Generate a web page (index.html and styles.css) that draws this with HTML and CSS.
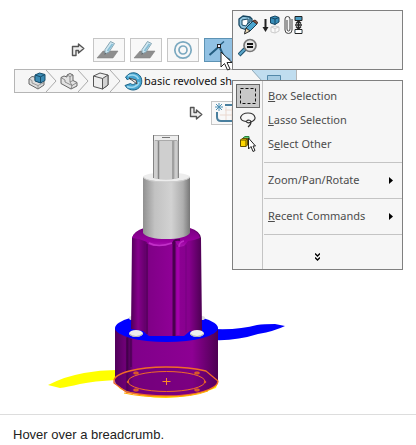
FILE: index.html
```html
<!DOCTYPE html>
<html lang="en">
<head>
    <meta charset="utf-8">
    <meta name="viewport" content="width=device-width, initial-scale=1">
    <title>Selection Breadcrumbs</title>
    <link rel="stylesheet" href="styles.css">
</head>

<body>
    <figure class="figure">
        <div class="stage">
            <!-- Sketch row above the breadcrumb -->
            <div class="tool-row tool-row-top">
                <svg class="turn-arrow" width="14" height="14" viewBox="0 0 14 14">
                    <path d="M1.5 12.5V3.5H7.5V1L12.8 5.5 7.5 10V7.5H5V12.5Z" fill="#eee" stroke="#555" stroke-width="1.4" stroke-linejoin="round"/>
                </svg>
                <button class="tool" aria-label="Sketch 1">
                    <svg width="26" height="20" viewBox="0 0 26 20">
                        <path d="M7 11H22L17 18H1Z" fill="#8e8e8e" stroke="#7c7c7c" stroke-width=".5"/>
                        <path d="M14.500 1.500 18.500 3.500 13 12 9 14 9 9.500Z" fill="#cfe7f1" stroke="#7c9dac" stroke-width=".9"/>
                        <path d="M16.500 4 11.500 11" stroke="#86bdd5" stroke-width="1.800"/>
                        <path d="M8.500 15 8.800 12.500 10.500 13.500Z" fill="#666"/>
                    </svg>
                </button>
                <button class="tool" aria-label="Sketch 2">
                    <svg width="26" height="20" viewBox="0 0 26 20">
                        <path d="M7 11H22L17 18H1Z" fill="#8e8e8e" stroke="#7c7c7c" stroke-width=".5"/>
                        <path d="M14.500 1.500 18.500 3.500 13 12 9 14 9 9.500Z" fill="#cfe7f1" stroke="#7c9dac" stroke-width=".9"/>
                        <path d="M16.500 4 11.500 11" stroke="#86bdd5" stroke-width="1.800"/>
                        <path d="M8.500 15 8.800 12.500 10.500 13.500Z" fill="#666"/>
                    </svg>
                </button>
                <button class="tool" aria-label="Concentric mate">
                    <svg width="20" height="20" viewBox="0 0 20 20" fill="none" stroke="#7ba9c0" stroke-width="1.7">
                        <circle cx="10" cy="10" r="8.2"/>
                        <circle cx="10" cy="10" r="4"/>
                    </svg>
                </button>
                <button class="tool tool-hover" aria-label="Coincident mate">
                    <svg width="24" height="20" viewBox="0 0 24 20" fill="none">
                        <path d="M1.500 15 10 7.500M12 8 16 17 22 20" stroke="#245d80" stroke-width="2"/>
                        <path d="M12 5 16 1.500" stroke="#245d80" stroke-width="1.4"/>
                        <rect x="9.500" y="4.500" width="3" height="3" fill="#eef" stroke="#222"/>
                    </svg>
                </button>
            </div>

            <ol class="breadcrumb">
                <li class="crumb">
                    <a href="#assembly" aria-label="Assembly">
                        <svg width="18" height="18" viewBox="0 0 18 18" stroke-linejoin="round">
                            <path d="M1 7 4 4.5 7 5V8L11 10 16 8V13L10 17 1 12Z" fill="#ddd" stroke="#666"/>
                            <path d="M1 7 4 8.5V11L10 13.5V17M10 13.5 16 10.5" fill="none" stroke="#888" stroke-width=".8"/>
                            <path d="M7 3 11.5 1 17 2.5V8.5L12.5 11 7 9Z" fill="#3b8bb4" stroke="#174d6b"/>
                            <path d="M7 3 12.5 4.8 17 2.5M12.5 4.8V11" fill="none" stroke="#174d6b"/>
                        </svg>
                    </a>
                    <svg class="crumb-sep" width="11" height="22" viewBox="0 0 11 22"><path d="M0 0 10 11 0 22" fill="none" stroke="#aaa"/></svg>
                </li>
                <li class="crumb">
                    <a href="#component" aria-label="Component">
                        <svg width="18" height="18" viewBox="0 0 18 18" stroke="#666" stroke-linejoin="round">
                            <path d="M1 5.500 4 4 7 5V3L10 1.500 13 3V8.500L17 10.500V14L11 17 1 11.5Z" fill="#e2e2e2"/>
                            <path d="M7 3 10 4.5 13 3M10 4.5V10L13 8.500M10 10 12 13.500 17 10.500M1 5.500 5 8V10L12 13.500 11 17" fill="none" stroke="#777" stroke-width=".8"/>
                        </svg>
                    </a>
                    <svg class="crumb-sep" width="11" height="22" viewBox="0 0 11 22"><path d="M0 0 10 11 0 22" fill="none" stroke="#aaa"/></svg>
                </li>
                <li class="crumb">
                    <a href="#body" aria-label="Body">
                        <svg width="18" height="18" viewBox="0 0 18 18" stroke="#555" stroke-linejoin="round">
                            <path d="M1.5 4 8 1 16 3V13L10.5 17 1.5 14.5Z" fill="#eee"/>
                            <path d="M10.5 6.5 16 3V13L10.5 17Z" fill="#d2d2d2"/>
                            <path d="M1.5 4 10.5 6.5" fill="none"/>
                        </svg>
                    </a>
                    <svg class="crumb-sep" width="11" height="22" viewBox="0 0 11 22"><path d="M0 0 10 11 0 22" fill="none" stroke="#aaa"/></svg>
                </li>
                <li class="crumb crumb-feature">
                    <a href="#feature">
                        <svg width="19" height="19" viewBox="0 0 19 19" stroke-linejoin="round">
                            <path d="M5 2C9-.5 15 1 17 5.500 19 10 17 16 12 17.500 8 19 3 17 1 13.500L6.500 11.500C9 13.500 12 12 12 9.500L5 6.500 3.500 8 1.500 5Z" fill="#49a7d2" stroke="#1b6286"/>
                            <path d="M4 4C8 2 13 3 14.500 7M3 14.500C8 16.500 14 14.500 15 10" fill="none" stroke="#a1daf0" stroke-width="1.500"/>
                            <path d="M5 6 12 8 13 12Z" fill="#eee" stroke="#333" stroke-width=".8"/>
                        </svg>
                        <span>basic revolved sh</span>
                    </a>
                </li>
                <li class="crumb crumb-face">
                    <svg class="crumb-sep" width="11" height="22" viewBox="0 0 11 22"><path d="M0 0 10 11 0 22Z" fill="#f6f6f6"/><path d="M0 0 10 11 0 22" fill="none" stroke="#8fa9b8"/></svg>
                    <a href="#face" aria-label="Face">
                        <svg width="16" height="14" viewBox="0 0 16 14"><path d="M1.500 1.500H14.500V12.500H1.500Z" fill="#a5cbe2" stroke="#5288a9"/></svg>
                    </a>
                </li>
            </ol>

            <!-- Features row below the breadcrumb -->
            <div class="tool-row tool-row-bottom">
                <svg class="turn-arrow" width="14" height="14" viewBox="0 0 14 14">
                    <path d="M1.500 1.500V10.500H7.500V13L12.800 8.500 7.500 4V6.500H5V1.500Z" fill="#eee" stroke="#555" stroke-width="1.400" stroke-linejoin="round"/>
                </svg>
                <button class="tool" aria-label="New sketch">
                    <svg width="24" height="20" viewBox="0 0 24 20" fill="none">
                        <path d="M10 7H24M5 12H24M11 4V17M17 4V17" stroke="#ead8cf"/>
                        <path d="M10 2H24M2 9V14Q2 18 6 18H24" stroke="#497f9e" stroke-width="2"/>
                        <path d="M4 0V8M0 4H8M1 1 7 7M7 1 1 7" stroke="#4c90b5"/>
                    </svg>
                </button>
            </div>

            <svg class="model" width="260" height="274" viewBox="40 130 260 274" role="img" aria-label="Revolved shaft model">
                <defs>
                    <linearGradient id="steel">
                        <stop offset="0" stop-color="#909090"/>
                        <stop offset=".25" stop-color="#c2c2c2"/>
                        <stop offset=".6" stop-color="#d2d2d2"/>
                        <stop offset=".85" stop-color="#aeaeae"/>
                        <stop offset="1" stop-color="#777"/>
                    </linearGradient>
                    <linearGradient id="hub">
                        <stop offset="0" stop-color="#500057"/>
                        <stop offset=".1" stop-color="#85008b"/>
                        <stop offset=".2" stop-color="#64006b"/>
                        <stop offset=".25" stop-color="#800087"/>
                        <stop offset=".58" stop-color="#8f0096"/>
                        <stop offset=".82" stop-color="#86008d"/>
                        <stop offset="1" stop-color="#4c0052"/>
                    </linearGradient>
                    <linearGradient id="flange">
                        <stop offset="0" stop-color="#50005a"/>
                        <stop offset=".1" stop-color="#700078"/>
                        <stop offset=".12" stop-color="#480050"/>
                        <stop offset=".18" stop-color="#80008a"/>
                        <stop offset=".75" stop-color="#8d0093"/>
                        <stop offset="1" stop-color="#4d0053"/>
                    </linearGradient>
                    <linearGradient id="rim" x2="0" y2="1">
                        <stop offset="0" stop-color="#780080"/>
                        <stop offset=".7" stop-color="#9a00a1"/>
                        <stop offset="1" stop-color="#ad18b4"/>
                    </linearGradient>
                </defs>

                <!-- yellow and blue section faces -->
                <path d="M48 385Q66 376 84 373 100 370 116 370V380Q94 381 80 384 67 387 60 388Z" fill="#ff0"/>
                <path d="M115 382A52 16 0 0 0 218 382L216 388Q195 397 166 398 142 398 120 389Z" fill="#ff0"/>
                <path d="M214 329Q240 330 257 325 264 324 275 324L285 326Q275 331 258 334 236 341 214 340Z" fill="#00f"/>

                <!-- flange -->
                <path d="M115 328V381C116 388 132 396 166 396 200 396 218 388 218 381V328Z" fill="url(#flange)"/>
                <path d="M127 338V391M131 339V367" stroke="#3f0047"/>
                <ellipse cx="166.500" cy="328" rx="51.500" ry="14" fill="#00f"/>
                <path d="M114 381C114 373 138 367 166 367 184 367 198 369 206 371L218 381C218 389 196 396 166 396 150 396 136 394 126 392L114 383Z" fill="#65006d" fill-opacity=".45" stroke="#f16b27" stroke-width="1.300"/>
                <ellipse cx="166.500" cy="381.500" rx="38.500" ry="10" fill="none" stroke="#f16b27"/>
                <path d="M124 393Q142 397 166 397 192 397 208 391" fill="none" stroke="#fa0"/>
                <g fill="#b54522" stroke="#f16b27">
                    <ellipse cx="136" cy="373" rx="2.500" ry="1"/>
                    <ellipse cx="197" cy="373" rx="2.500" ry="1"/>
                    <ellipse cx="136" cy="390" rx="2.500" ry="1"/>
                    <ellipse cx="197" cy="390" rx="2.500" ry="1"/>
                    <circle cx="128" cy="382" r=".8"/>
                    <circle cx="205" cy="382" r=".8"/>
                </g>
                <path d="M162.500 381.500H170.500M166.500 378V385" stroke="#ff8a22"/>

                <!-- hub -->
                <ellipse cx="132" cy="318" rx="3" ry="2" fill="#ddd"/>
                <ellipse cx="202" cy="318" rx="3" ry="2" fill="#ddd"/>
                <path d="M132 238Q134 231 144 228H190Q200 231 201 238L202 331Q194 334 190 331L184 336H149L143 331 131 329Z" fill="url(#hub)"/>
                <path d="M132 238Q134 231 144 229H190Q199 232 200 238L194 240 188 241 184 246 179 247 174 240Q168 246 157 246 148 246 147 242L139 239Z" fill="url(#rim)"/>
                <path d="M149 243Q158 248 172 243" fill="none" stroke="#c130c8" stroke-width="1.500"/>
                <path d="M174 242V336" stroke="#49004e" stroke-width="3"/>
                <path d="M178 247V335" stroke="#a300aa" stroke-width="3"/>
                <path d="M174 245Q172 239 180 240" fill="none" stroke="#4e0054" stroke-width="2"/>
                <path d="M179 247Q179 242 184 241" fill="none" stroke="#bd2bc4" stroke-width="1.500"/>
                <path d="M147 244V334" stroke="#5c0063" stroke-width="2"/>
                <path d="M186 245V332" stroke="#770080"/>
                <ellipse cx="136" cy="333.500" rx="7" ry="3.500" fill="#eee"/>
                <ellipse cx="197" cy="333.500" rx="7" ry="3.500" fill="#eee"/>
                <path d="M129 334Q136 339 143 334M190 334Q197 339 204 334" fill="none" stroke="#aaa"/>

                <!-- shaft -->
                <path d="M143 177V233Q148 239 166 239 185 239 190 233V177Z" fill="url(#steel)"/>
                <ellipse cx="166.500" cy="177" rx="23.500" ry="4.500" fill="#ededed"/>
                <path d="M143 177Q147 182 166 182 186 182 190 177" fill="none" stroke="#ccc"/>
                <path d="M153 139H179V178Q166 181 153 178Z" fill="#bbb"/>
                <path d="M154 141H157V178H154ZM160 141H172V179H160Z" fill="#cfcfcf"/>
                <path d="M153.500 139V178M158.500 141V179M173 141V179M178.500 140V178" stroke="#858585"/>
                <path d="M176 141V178" stroke="#ddd"/>
                <path d="M153 135.500H179V140.500H153Z" fill="#eee"/>
                <path d="M153 135.500H179M155 140.500H177" stroke="#aaa"/>
                <path d="M153.500 135V141M178.500 135V141M162 137.500H170" stroke="#777"/>
            </svg>

            <!-- Context toolbar -->
            <div class="popup context-bar">
                <button class="icon-button" aria-label="Edit Feature">
                    <svg width="20" height="20" viewBox="0 0 20 20" stroke-linejoin="round">
                        <path d="M1 4 5 1 12 2 14 4V10L9 15 3 13 1 10Z" fill="#8fc4de" stroke="#164661" stroke-width="1.300"/>
                        <path d="M4 5 10 4V8L8 11 4 10Z" fill="#fff" stroke="#164661"/>
                        <path d="M12 2V7L9 9" fill="none" stroke="#164661"/>
                        <path d="M15 6 19 9 12 16 7 18 8 13Z" fill="#4aa5cf" stroke="#173d55"/>
                        <path d="M15 6 17 5 19.500 7 19 9Z" fill="#8e5b4b" stroke="#4a3028"/>
                        <path d="M8 13 12 16 6.500 19Z" fill="#ead7b2" stroke="#333"/>
                    </svg>
                </button>
                <button class="icon-button" aria-label="Suppress">
                    <svg width="20" height="20" viewBox="0 0 20 20" stroke-linejoin="round">
                        <path d="M4.500 4V14" stroke="#222" stroke-width="2"/><path d="M1.500 12H7.500L4.500 17Z" fill="#222"/>
                        <path d="M9.500 2.500 14 1 18 2.500V7L14 9.500 9.500 8Z" fill="#398eb8" stroke="#174663"/>
                        <path d="M9.500 2.500 14 4 18 2.500M14 4V9.500" fill="none" stroke="#174663"/>
                        <path d="M10 12 14 11 18 12V16L14 18 10 17ZM10 12 14 13.500 18 12M14 13.500V18" fill="#fafafa" stroke="#ccc"/>
                    </svg>
                </button>
                <button class="icon-button" aria-label="View Mates">
                    <svg width="20" height="20" viewBox="0 0 20 20" fill="none">
                        <path d="M3 5V14Q3 16 4.500 16T6 14V4Q6 1.500 3.500 1.500T1 4V15Q1 18.500 4.500 18.500T8 15V4" stroke="#444"/>
                        <path d="M11 1.500H18V5.500H11ZM11 14.500H18V18.500H11Z" fill="#4b9cc1" stroke="#222"/>
                        <path d="M11.500 15H17.500V18H11.500Z" fill="#fff"/>
                        <path d="M14.500 6V14M12 8.500 14.500 6 17 8.500M12 11.500 14.500 14 17 11.500M11 10H18" stroke="#222" stroke-width="1.500"/>
                    </svg>
                </button>
                <button class="icon-button" aria-label="Zoom to Selection">
                    <svg width="20" height="20" viewBox="0 0 20 20">
                        <path d="M1 17 7 11" stroke="#1d526e" stroke-width="4"/><path d="M1.500 16.500 7 11" stroke="#5ba7cb" stroke-width="2"/>
                        <circle cx="12" cy="7.500" r="6" fill="#e4e4e4" stroke="#777" stroke-width="1.700"/>
                        <path d="M9 6H15M9 9H15" stroke="#111" stroke-width="2"/>
                    </svg>
                </button>
            </div>

            <!-- Shortcut menu -->
            <div class="popup menu">
                <button class="menu-item">
                    <span class="menu-icon menu-icon-active">
                        <svg width="16" height="16" viewBox="0 0 16 16"><rect x=".5" y=".5" width="15" height="15" fill="none" stroke="#111" stroke-dasharray="3 2"/></svg>
                    </span>
                    <span><u>B</u>ox Selection</span>
                </button>
                <button class="menu-item">
                    <span class="menu-icon">
                        <svg width="16" height="16" viewBox="0 0 16 16" fill="none" stroke="#333"><path d="M11 10Q15.500 8 15 5.500 14 1 8 1T.5 5.500Q1 9 6 9.500L8 8Q11 8 11 10 11 13 8 15M6 9.500Q8 12 11 10" stroke-width="1.200"/></svg>
                    </span>
                    <span><u>L</u>asso Selection</span>
                </button>
                <button class="menu-item">
                    <span class="menu-icon">
                        <svg width="16" height="16" viewBox="0 0 16 16">
                            <path d="M3 2 5 .5H9V8H3Z" fill="#65c978" stroke="#26823a"/>
                            <path d="M.5 4 2 2.500H7.500V9L6 10.500H.5Z" fill="#ffd800" stroke="#665200"/><path d="M.5 4H6L7.500 2.500M6 4V10.500" fill="none" stroke="#665200"/>
                            <path d="M8.500 2V13L11 10.500 13 15.500 15 14.500 13 10H15.500Z" fill="#fff" stroke="#222"/>
                        </svg>
                    </span>
                    <span>S<u>e</u>lect Other</span>
                </button>
                <hr class="menu-rule">
                <button class="menu-item">
                    <span class="menu-icon"></span>
                    <span>Zoom/Pan/Rotate</span>
                    <svg class="submenu-arrow" width="4" height="7" viewBox="0 0 4 7"><path d="M0 0 4 3.500 0 7Z"/></svg>
                </button>
                <hr class="menu-rule">
                <button class="menu-item">
                    <span class="menu-icon"></span>
                    <span><u>R</u>ecent Commands</span>
                    <svg class="submenu-arrow" width="4" height="7" viewBox="0 0 4 7"><path d="M0 0 4 3.500 0 7Z"/></svg>
                </button>
                <hr class="menu-rule">
                <button class="menu-more" aria-label="Show more">
                    <svg width="5" height="8" viewBox="0 0 5 8" fill="none" stroke="#000" stroke-width="1.300"><path d="M0 .5 2.500 3 5 .5M0 4.500 2.500 7 5 4.500"/></svg>
                </button>
            </div>

            <svg class="cursor" width="14" height="20" viewBox="0 0 14 20"><path d="M1 1V16L4.500 12.500 7.500 19 10 18 7 11.500H12Z" fill="#fff" stroke="#222"/></svg>
        </div>
        <figcaption class="caption">Hover over a breadcrumb.</figcaption>
    </figure>
</body>
</html>
```

FILE: styles.css
```css
body {
    margin: 0;
    background: #fff;
    color: #222;
    font-family: "Liberation Sans", Arial, sans-serif;
    font-size: 13px;
}

.figure {
    margin: 0;
}

.stage {
    position: relative;
    padding: 38px 14px 10px;
    border-bottom: 1px solid #ddd;
    font-family: "Noto Sans", "Open Sans", sans-serif;
    font-size: 11px;
    line-height: 16px;
}

svg {
    display: block;
    flex: none;
}

button {
    margin: 0;
    padding: 0;
    border: none;
    background: none;
    color: inherit;
    font: inherit;
}

a {
    color: inherit;
    text-decoration: none;
}

/* Rows of related items around the breadcrumb */
.tool-row {
    display: flex;
    align-items: center;
    gap: 5px;
}

.tool-row-top {
    padding-left: 57px;
    margin-bottom: 7px;
}

.tool-row-bottom {
    padding-left: 175px;
    margin-top: 8px;
}

.turn-arrow {
    margin-right: 3px;
}

.tool {
    display: flex;
    align-items: center;
    justify-content: center;
    box-sizing: border-box;
    width: 32px;
    height: 24px;
    border: 1px solid #c6c6c6;
    background: #f8f8f8;
}

.tool-hover {
    border-color: #5d93b4;
    background: #91c1e3;
}

/* Breadcrumb */
.breadcrumb {
    display: flex;
    box-sizing: border-box;
    width: 283px;
    height: 24px;
    margin: 0;
    padding: 0 0 0 13px;
    border: 1px solid #b5b5b5;
    background: #f6f6f6;
    list-style: none;
}

.crumb {
    display: flex;
    align-items: center;
    margin-right: 3px;
}

.crumb a {
    display: flex;
    align-items: center;
    gap: 1px;
    color: #111;
    white-space: nowrap;
}

.crumb-feature {
    flex: 1;
    margin-right: 0;
}

.crumb-face {
    width: 44px;
    margin-right: 0;
    gap: 3px;
    background: #c0ddef;
}

.model {
    margin: 5px 0 0 26px;
}

/* Popups */
.popup {
    position: absolute;
    right: 13px;
    box-sizing: border-box;
    width: 171px;
    border: 1px solid #808080;
    background: #f6f6f6;
}

.context-bar {
    top: 10px;
    display: grid;
    grid-template-columns: repeat(3, 20px);
    align-content: start;
    gap: 3px;
    height: 60px;
    padding: 4px 5px;
}

.menu {
    top: 80px;
    padding: 3px 0 0;
    background: linear-gradient(to right, #f6f6f6 29px, #c4c4c4 29px, #c4c4c4 30px, #f6f6f6 30px);
    color: #4c4c4c;
}

.menu-item {
    display: flex;
    align-items: center;
    width: 100%;
    height: 24px;
    text-align: left;
}

.menu-icon {
    display: flex;
    align-items: center;
    justify-content: center;
    box-sizing: border-box;
    width: 24px;
    height: 24px;
    margin: 0 8px 0 3px;
}

.menu-icon-active {
    border: 1px solid #666;
    background: #c8c8c8;
}

.submenu-arrow {
    margin-left: auto;
    margin-right: 9px;
}

.menu-rule {
    height: 1px;
    margin: 6px 0 5px 31px;
    border: none;
    background: #c4c4c4;
}

.menu-more {
    display: flex;
    align-items: center;
    justify-content: center;
    width: 100%;
    height: 29px;
    padding-top: 4px;
}

.cursor {
    position: absolute;
    left: 220px;
    top: 51px;
}

.caption {
    padding: 12px 13px;
    line-height: 15px;
}
```
